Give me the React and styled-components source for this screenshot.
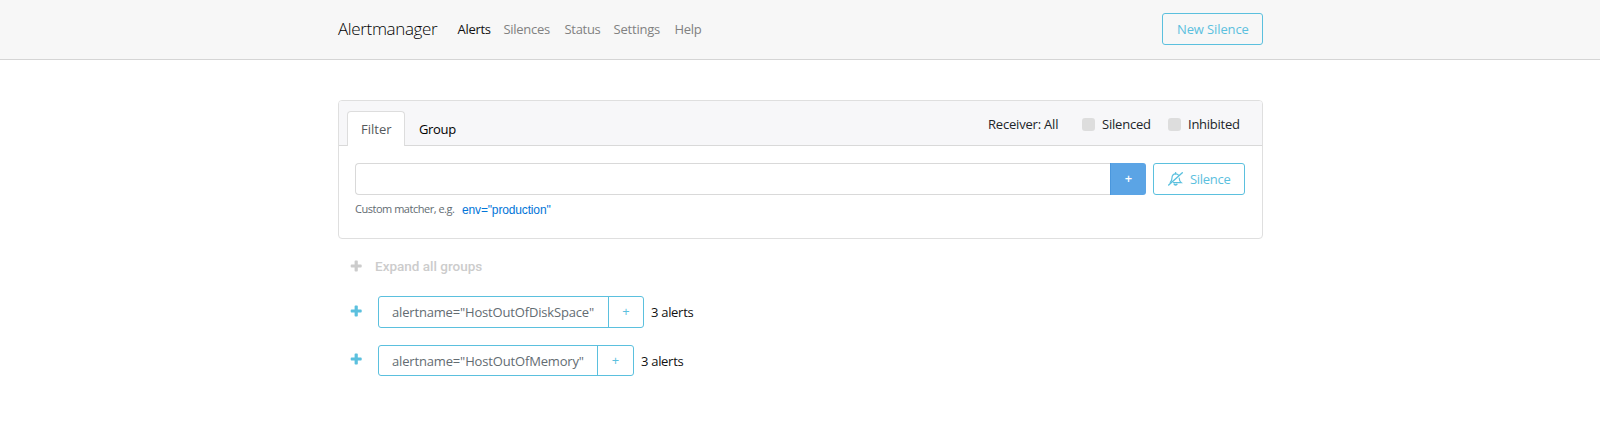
import React from "react";
import styled, { createGlobalStyle, css } from "styled-components";

const Global = createGlobalStyle`
  *, *::before, *::after { box-sizing: border-box; }
  body {
    margin: 0;
    background: #fff;
    color: #212529;
    font-family: "Open Sans", "Noto Sans", sans-serif;
    font-size: 13px;
    line-height: 20px;
  }
  button, input { font: inherit; margin: 0; }
`;

const Label = styled.span`
  display: inline-block;
  white-space: nowrap;
  width: ${(p) => p.$w}px;
  letter-spacing: ${(p) => p.$ls || 0}px;
`;

const Navbar = styled.header`
  height: 60px;
  background: #f7f7f7;
  border-bottom: 1px solid #d5d5d5;
`;

const Container = styled.div`
  width: 925px;
  margin-left: calc(50% - 462px);
`;

const NavInner = styled(Container)`
  display: flex;
  align-items: flex-start;
  padding-top: 13px;
`;

const Brand = styled.a`
  margin: 3px 19px 0 0;
  font-size: 17px;
  font-weight: 300;
  line-height: 26px;
  color: #000;
`;

const Nav = styled.nav`
  display: flex;
  flex: 1;
  gap: 13px;
  padding-top: 6px;
`;

const NavLink = styled.a`
  color: ${(p) => (p.$active ? "#111" : "#818181")};
`;

const OutlineButton = styled.button`
  display: flex;
  align-items: center;
  height: 32px;
  padding: 0 14px;
  border: 1px solid #5bc0de;
  border-radius: 3px;
  background: transparent;
  color: #5bc0de;
`;

const Card = styled.section`
  height: 139px;
  margin-top: 40px;
  border: 1px solid #dfdfdf;
  border-radius: 4px;
  background: #fff;
`;

const CardHeader = styled.div`
  display: flex;
  height: 45px;
  padding: 10px 22px 0 8px;
  background: #f7f7f9;
  border-bottom: 1px solid #d9d9d9;
  border-radius: 3px 3px 0 0;
`;

const Tab = styled.a`
  height: 35px;
  padding: 7px 14px 0 13px;
  border: 1px solid transparent;
  border-radius: 4px 4px 0 0;
  border-bottom: 0;
  color: #000;
  ${(p) =>
    p.$active &&
    css`
      padding: 7px 14px 0 13px;
      background: #fff;
      border-color: #ddd;
      color: #55595c;
    `}
`;

const Filters = styled.div`
  display: flex;
  margin-left: auto;
  padding-top: 3px;
`;

const Check = styled.label`
  display: flex;
  align-items: flex-start;
  gap: 7px;
  margin-left: ${(p) => p.$gap}px;
`;

const Box = styled.span`
  width: 13px;
  height: 13px;
  margin-top: 4px;
  border-radius: 3px;
  background: #ddd;
`;

const CardBody = styled.div`
  padding: 17px 17px 0 16px;
`;

const Row = styled.div`
  display: flex;
`;

const MatcherInput = styled.input`
  flex: 1;
  height: 32px;
  border: 1px solid #d9d9d9;
  border-right: 0;
  border-radius: 4px 0 0 4px;
  outline: none;
`;

const AddButton = styled.button`
  display: flex;
  align-items: center;
  justify-content: center;
  width: 36px;
  height: 32px;
  margin-right: 7px;
  padding: 0 0 2px;
  border: 0;
  border-left: 1px solid #4a97dd;
  border-radius: 0 3px 3px 0;
  background: #5ba4e5;
  color: #fff;
  font-weight: 600;
`;

const Hint = styled.div`
  display: flex;
  padding-top: 4px;
  font-size: 11px;
  color: #636c72;
`;

const Example = styled.a`
  margin-left: 8px;
  padding-top: 1px;
  font-family: "Liberation Sans", Arial, sans-serif;
  font-size: 12px;
  letter-spacing: -0.15px;
  color: #0275d8;
`;

const ExpandAll = styled.div`
  display: flex;
  align-items: center;
  height: 22px;
  margin: 16px 0 19px;
  padding-left: 12px;
  gap: 13px;
  font: 500 13.5px/20px Roboto, "Liberation Sans", sans-serif;
  color: #ccc;
`;

const Group = styled.div`
  display: flex;
  align-items: flex-start;
  height: ${(p) => p.$h}px;
  margin-bottom: 17px;
  padding-left: 12px;
`;

const Expander = styled.span`
  display: flex;
  width: 28px;
  padding-top: ${(p) => p.$top}px;
  color: #5bc0de;
`;

const Matcher = styled.div`
  display: flex;
  height: 100%;
  border: 1px solid #5bc0de;
  border-radius: 3px;
`;

const MatcherText = styled.span`
  padding: 5px 13px 0;
  color: #636c72;
`;

const MatcherAdd = styled.span`
  display: flex;
  justify-content: center;
  width: ${(p) => p.$w}px;
  padding-top: 4px;
  border-left: 1px solid #5bc0de;
  color: #5bc0de;
`;

const Count = styled.span`
  padding: 6px 0 0 7px;
  color: #111;
`;

const PlusIcon = () => (
  <svg width="12" height="12" viewBox="-.7 -.5 12 12" fill="currentColor">
    <path d="M4.7 0h1.6q.8 0 .8.8v3.1h3.1q.8 0 .8.8v1.6q0 .8-.8.8H7.1v3.1q0 .8-.8.8H4.7q-.8 0-.8-.8V7.1H.8Q0 7.1 0 6.3V4.7q0-.8.8-.8h3.1V.8q0-.8.8-.8z" />
  </svg>
);

const BellSlash = styled.svg`
  margin-right: 7px;
`;

const BellSlashIcon = () => (
  <BellSlash width="15" height="14" viewBox="0 0 15 14" fill="none" stroke="currentColor" strokeLinecap="round">
    <path d="M.7 13.1 14.3.8" strokeWidth="1.4" />
    <path d="M10.5 3.2C9.8 2.2 8.800 1.900 7.600 1.900 5.400 1.900 4 3.500 4 5.700 4 7.700 3.300 9.200 2.200 10.300M5.500 10.700H13.300C12 9.600 11.300 8.300 11.200 6.200" strokeWidth="1.2" />
    <path d="M7.600 .8v1M6.300 12.300q1.300 1.500 2.600 0" strokeWidth="1.5" />
  </BellSlash>
);

const links = [
  { name: "Alerts", w: 33, ls: -0.3, active: true },
  { name: "Silences", w: 48, ls: -0.3 },
  { name: "Status", w: 36, ls: -0.3 },
  { name: "Settings", w: 48, ls: -0.2 },
  { name: "Help", w: 27, ls: -0.3 },
];

const groups = [
  { text: 'alertname="HostOutOfDiskSpace"', w: 203, h: 32, top: 9, add: 35, ls: -0.17 },
  { text: 'alertname="HostOutOfMemory"', w: 192, h: 31, top: 8, add: 36, ls: -0.16 },
];

export default function App() {
  return (
    <>
      <Global />
      <Navbar>
        <NavInner>
          <Brand><Label $w={100.5} $ls={-0.35}>Alertmanager</Label></Brand>
          <Nav>
            {links.map((l) => (
              <NavLink key={l.name} $active={l.active}>
                <Label $w={l.w} $ls={l.ls}>{l.name}</Label>
              </NavLink>
            ))}
          </Nav>
          <OutlineButton><Label $w={71} $ls={-0.12}>New Silence</Label></OutlineButton>
        </NavInner>
      </Navbar>
      <Container>
        <Card>
          <CardHeader>
            <Tab $active><Label $w={29}>Filter</Label></Tab>
            <Tab><Label $w={38} $ls={-0.35}>Group</Label></Tab>
            <Filters>
              <Label $w={71} $ls={-0.2}>Receiver: All</Label>
              <Check $gap={23}><Box /><Label $w={49} $ls={-0.2}>Silenced</Label></Check>
              <Check $gap={17}><Box /><Label $w={52} $ls={-0.25}>Inhibited</Label></Check>
            </Filters>
          </CardHeader>
          <CardBody>
            <Row>
              <MatcherInput aria-label="Matcher" />
              <AddButton>+</AddButton>
              <OutlineButton><BellSlashIcon /><Label $w={40} $ls={-0.3}>Silence</Label></OutlineButton>
            </Row>
            <Hint>
              <Label $w={99} $ls={-0.48}>Custom matcher, e.g.</Label>
              <Example>env="production"</Example>
            </Hint>
          </CardBody>
        </Card>
        <ExpandAll><PlusIcon />Expand all groups</ExpandAll>
        {groups.map((g) => (
          <Group key={g.text} $h={g.h}>
            <Expander $top={g.top}><PlusIcon /></Expander>
            <Matcher>
              <MatcherText><Label $w={g.w} $ls={g.ls}>{g.text}</Label></MatcherText>
              <MatcherAdd $w={g.add}>+</MatcherAdd>
            </Matcher>
            <Count><Label $w={44} $ls={-0.3}>3 alerts</Label></Count>
          </Group>
        ))}
      </Container>
    </>
  );
}
